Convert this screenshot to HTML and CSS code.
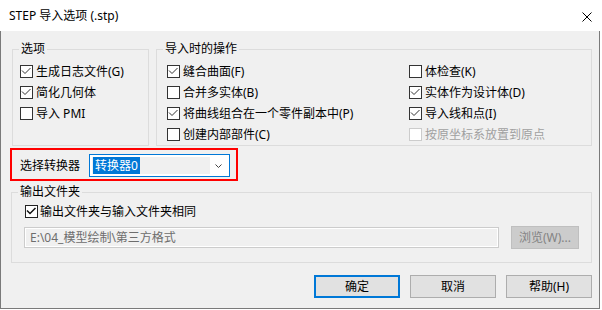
FILE: index.html
```html
<!DOCTYPE html>
<html lang="zh-CN">
<head>
<meta charset="utf-8">
<title>STEP 导入选项</title>
<link rel="stylesheet" href="styles.css">
</head>
<body>
<div class="window">
  <div class="titlebar">
    <span class="title">STEP 导入选项 (.stp)</span>
    <svg class="close" width="10" height="10" viewBox="0 0 10 10"><path d="M0.5 0.5L9.5 9.5M9.5 0.5L0.5 9.5" stroke="#000" stroke-width="1"/></svg>
  </div>
  <div class="client">
    <div class="groups">
      <fieldset class="group g-options">
        <legend>选项</legend>
        <div class="list">
          <div class="cb"><span class="box"><svg viewBox="0 0 11 11"><path d="M1 4.5L4 7.5L9.5 2" /></svg></span>生成日志文件(G)</div>
          <div class="cb"><span class="box"><svg viewBox="0 0 11 11"><path d="M1 4.5L4 7.5L9.5 2" /></svg></span>简化几何体</div>
          <div class="cb"><span class="box"></span>导入 PMI</div>
        </div>
      </fieldset>
      <fieldset class="group g-actions">
        <legend>导入时的操作</legend>
        <div class="grid">
          <div class="cb"><span class="box"><svg viewBox="0 0 11 11"><path d="M1 4.5L4 7.5L9.5 2" /></svg></span>缝合曲面(F)</div>
          <div class="cb"><span class="box"></span>体检查(K)</div>
          <div class="cb"><span class="box"></span>合并多实体(B)</div>
          <div class="cb"><span class="box"><svg viewBox="0 0 11 11"><path d="M1 4.5L4 7.5L9.5 2" /></svg></span>实体作为设计体(D)</div>
          <div class="cb"><span class="box"><svg viewBox="0 0 11 11"><path d="M1 4.5L4 7.5L9.5 2" /></svg></span>将曲线组合在一个零件副本中(P)</div>
          <div class="cb"><span class="box"><svg viewBox="0 0 11 11"><path d="M1 4.5L4 7.5L9.5 2" /></svg></span>导入线和点(I)</div>
          <div class="cb"><span class="box"></span>创建内部部件(C)</div>
          <div class="cb disabled"><span class="box"></span>按原坐标系放置到原点</div>
        </div>
      </fieldset>
    </div>

    <div class="converter">
      <span class="conv-label">选择转换器</span>
      <div class="combo">
        <div class="combo-edit"><span class="sel">转换器0</span></div>
        <div class="combo-btn"><svg width="7" height="4" viewBox="0 0 7 4"><path d="M0.5 0.5L3.5 3.5L6.5 0.5" fill="none" stroke="#444" stroke-width="1"/></svg></div>
      </div>
    </div>

    <fieldset class="group g-output">
      <legend>输出文件夹</legend>
      <div class="cb cb-out"><span class="box strong"><svg viewBox="0 0 11 11"><path d="M1 4.5L4 7.5L9.5 2" /></svg></span>输出文件夹与输入文件夹相同</div>
      <div class="path-row">
        <div class="path">E:\04_模型绘制\第三方格式</div>
        <button class="btn btn-disabled" type="button">浏览(W)...</button>
      </div>
    </fieldset>

    <div class="actions">
      <button class="btn btn-default" type="button">确定</button>
      <button class="btn" type="button">取消</button>
      <button class="btn" type="button">帮助(H)</button>
    </div>
  </div>
</div>
</body>
</html>
```

FILE: styles.css
```css
* { box-sizing: border-box; }

html, body {
  margin: 0;
  padding: 0;
  background: #ffffff;
}

body {
  font-family: "Noto Sans", "Noto Sans CJK SC", sans-serif;
  font-size: 12px;
  color: #000;
  line-height: 16px;
}

.window {
  width: 600px;
  display: flex;
  flex-direction: column;
}

.titlebar {
  height: 31px;
  background: #ffffff;
  display: flex;
  align-items: center;
  justify-content: space-between;
  padding: 1px 8px 0 9px;
}

.title {
  line-height: 16px;
}

.close {
  display: block;
  margin-top: 1px;
}

.client {
  background: #f0f0f0;
  border-left: 1px solid #7a7a7a;
  border-right: 1px solid #7a7a7a;
  border-bottom: 1px solid #7a7a7a;
  padding: 10px 7px 10px 11px;
  display: flex;
  flex-direction: column;
}

.groups {
  display: flex;
  gap: 7px;
}

.group {
  margin: 0;
  padding: 0;
  min-width: 0;
  border: 1px solid #dcdcdc;
}

.group legend {
  margin-left: 6px;
  padding: 0 2px;
  line-height: 16px;
}

.g-options {
  width: 137px;
  flex: none;
}

.g-actions {
  flex: 1;
}

.list {
  padding: 4px 0 0 7px;
}

.grid {
  padding: 4px 0 0 10px;
  display: grid;
  grid-template-columns: 242px auto;
}

.cb {
  height: 21px;
  display: flex;
  align-items: center;
  gap: 3px;
  white-space: nowrap;
  line-height: 21px;
}

.box {
  width: 13px;
  height: 13px;
  flex: none;
  border: 1px solid #333333;
  background: #ffffff;
  display: block;
}

.box svg {
  display: block;
  width: 11px;
  height: 11px;
  fill: none;
  stroke: #333333;
  stroke-width: 1;
}

.box.strong {
  border-color: #222;
}

.box.strong svg {
  stroke: #111;
  stroke-width: 1.5;
}

.cb.disabled {
  color: #a0a0a0;
}

.cb.disabled .box {
  border-color: #cccccc;
}

.converter {
  margin: 2px 0 0 -2px;
  width: 228px;
  border: 2px solid #ff0000;
  padding: 4px 6px 2px 8px;
  display: flex;
  align-items: center;
}

.conv-label {
  width: 69px;
  flex: none;
}

.combo {
  width: 141px;
  height: 23px;
  border: 1px solid #0078d7;
  background: #ffffff;
  padding: 2px;
  display: flex;
}

.combo-edit {
  width: 118px;
  height: 17px;
  background: #f0f0f0;
  padding-left: 1px;
  display: flex;
}

.sel {
  background: #0078d7;
  color: #ffffff;
  line-height: 17px;
  padding: 0 2px;
}

.combo-btn {
  flex: 1;
  display: flex;
  align-items: center;
  justify-content: center;
}

.combo-btn svg {
  display: block;
}

.g-output {
  margin: 3px 0 0 -1px;
  padding: 1px 12px 13px 12px;
}

.g-output legend {
  margin-left: -6px;
}

.cb-out {
  gap: 2px;
  margin-left: 1px;
}

.path-row {
  margin-top: 4px;
  display: flex;
  align-items: center;
  gap: 12px;
}

.path {
  flex: 1;
  height: 21px;
  border: 1px solid #cccccc;
  box-shadow: inset 0 0 0 1px #ffffff;
  background: #f0f0f0;
  color: #6d6d6d;
  padding-left: 5px;
  line-height: 19px;
}

.btn {
  font: inherit;
  margin: 0;
  width: 86px;
  height: 23px;
  background: #e1e1e1;
  border: 1px solid #adadad;
  color: #000;
  padding: 0;
  line-height: 19px;
}

.btn-disabled {
  width: 68px;
  background: #cccccc;
  border-color: #bfbfbf;
  color: #838383;
}

.btn-default {
  border: 2px solid #0078d7;
}

.actions {
  margin-top: 12px;
  display: flex;
  justify-content: flex-end;
  gap: 10px;
}
```
